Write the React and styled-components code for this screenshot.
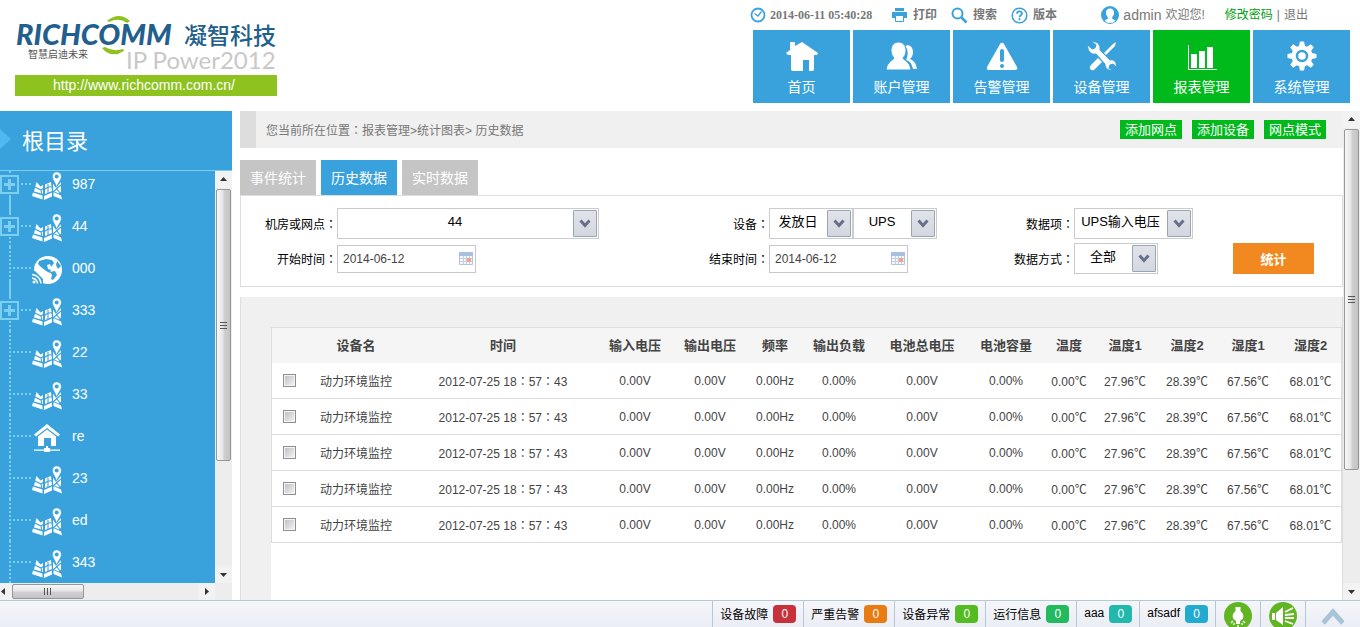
import React, { useState } from "react";
import styled, { createGlobalStyle, css } from "styled-components";

const blue = "#39a2dc";
const green = "#00ba1c";
const line = "#dddddd";

const GlobalStyle = createGlobalStyle`
  * {
    box-sizing: border-box;
  }
  body {
    margin: 0;
    background: #ffffff;
    font-family: "Liberation Sans", "Noto Sans CJK SC", sans-serif;
    font-size: 12px;
    color: #444444;
  }
  a {
    color: inherit;
    text-decoration: none;
  }
  button, input, select {
    font-family: inherit;
    margin: 0;
  }
`;

const Page = styled.div`
  display: flex;
  flex-direction: column;
  height: 100vh;
  overflow: hidden;
`;

/* ---------- header ---------- */
const Header = styled.header`
  display: flex;
  justify-content: space-between;
  flex: none;
  height: 111px;
  padding: 0 10px 0 15px;
`;
const Brand = styled.div`
  display: flex;
  flex-direction: column;
  width: 262px;
`;
const Site = styled.a`
  height: 21px;
  line-height: 20px;
  padding-right: 4px;
  background: #8dc21f;
  color: #ffffff;
  font-size: 14px;
  text-align: center;
`;
const HeaderRight = styled.div`
  display: flex;
  flex-direction: column;
  width: 600px;
`;
const Tools = styled.div`
  display: flex;
  align-items: center;
  height: 30px;
  line-height: 20px;
  color: #777777;
  white-space: nowrap;
`;
const Clock = styled.time`
  display: flex;
  align-items: center;
  gap: 4px;
  width: 141px;
  font-family: "Liberation Serif", serif;
  font-weight: bold;
`;
const Tool = styled.a`
  display: flex;
  align-items: center;
  gap: 5px;
  width: 60px;
  font-weight: bold;
`;
const User = styled.div`
  display: flex;
  align-items: center;
  gap: 4px;
  margin-left: auto;
  padding-right: 20px;
`;
const UserName = styled.span`
  font-size: 14px;
`;
const Account = styled.div`
  display: flex;
  gap: 4px;
  padding-right: 42px;
`;
const Password = styled.a`
  color: #00a010;
`;
const Nav = styled.nav`
  display: flex;
  gap: 3px;
  padding-left: 3px;
`;
const NavItem = styled.a`
  flex: 1;
  display: flex;
  flex-direction: column;
  align-items: center;
  gap: 4px;
  height: 73px;
  padding-top: 10px;
  background: ${(p) => (p.$active ? green : blue)};
  color: #ffffff;
  font-size: 14px;
  line-height: 20px;
`;

/* ---------- scroll bars ---------- */
const Track = styled.div`
  flex: none;
  display: flex;
  background: #ededed;
  ${(p) =>
    p.$horizontal
      ? css`
          height: 17px;
        `
      : css`
          flex-direction: column;
          width: 17px;
        `}
`;
const TrackEnd = styled.span`
  flex: none;
  display: flex;
  align-items: center;
  justify-content: center;
  width: 17px;
  height: 17px;
  background: #f2f2f2;
`;
const Thumb = styled.span`
  flex: ${(p) => p.$size} 1 0;
  display: flex;
  align-items: center;
  justify-content: center;
  margin: ${(p) => (p.$horizontal ? "1px 0" : "1px 1px 0")};
  border: 1px solid #979797;
  border-radius: 2px;
  background: linear-gradient(
    ${(p) => (p.$horizontal ? "180deg" : "90deg")},
    #f6f6f6 0%,
    #e6e6e8 45%,
    #cfcfd2 55%,
    #c2c3c7 100%
  );
`;
const Rest = styled.span`
  flex: ${(p) => p.$size} 1 0;
`;

function Arrow({ d }) {
  return (
    <svg width="9" height="9" viewBox="0 0 9 9">
      <path d={d} fill="#333" />
    </svg>
  );
}

function Scrollbar({ size, horizontal }) {
  return (
    <Track $horizontal={horizontal} aria-hidden="true">
      <TrackEnd>
        <Arrow d={horizontal ? "M6 1v7L2 4.500z" : "M1 6h7L4.500 2z"} />
      </TrackEnd>
      <Thumb $horizontal={horizontal} $size={size}>
        <svg width="9" height="9" viewBox="0 0 9 9" stroke="#555">
          {horizontal ? (
            <path d="M1.500 1v7M4.500 1v7M7.500 1v7" />
          ) : (
            <path d="M1 1.500h7M1 4.500h7M1 7.500h7" />
          )}
        </svg>
      </Thumb>
      <Rest $size={100 - size} />
      <TrackEnd>
        <Arrow d={horizontal ? "M3 1v7l4-3.500z" : "M1 3h7L4.500 7z"} />
      </TrackEnd>
    </Track>
  );
}

/* ---------- sidebar ---------- */
const Body = styled.div`
  flex: 1;
  display: flex;
  min-height: 0;
`;
const Sidebar = styled.aside`
  display: flex;
  flex-direction: column;
  flex: none;
  width: 232px;
  margin-right: 8px;
`;
const SideTitle = styled.h2`
  display: flex;
  align-items: center;
  gap: 11px;
  flex: none;
  height: 60px;
  margin: 0;
  padding-bottom: 4px;
  border-bottom: 1px solid #7bcdf2;
  background: ${blue};
  color: #ffffff;
  font-size: 22px;
  font-weight: normal;
`;
const SideBody = styled.div`
  flex: 1;
  display: flex;
  min-height: 0;
`;
const TreeBox = styled.div`
  flex: 1;
  overflow: hidden;
  background: ${blue};
`;
const Tree = styled.ul`
  margin: -8px 0 0;
  padding: 0;
  list-style: none;
`;
const Node = styled.li`
  display: flex;
  align-items: center;
  height: 42px;
  color: #ffffff;
  font-size: 14px;
  svg {
    margin: 4px 10px 0 0;
  }
`;
const dots = (dir) =>
  `repeating-linear-gradient(${dir}, #7bcff0 0 2px, transparent 2px 4px)`;
const solid = "linear-gradient(#7bcff0, #7bcff0)";
const Gutter = styled.span`
  display: flex;
  align-items: center;
  width: 32px;
  height: 42px;
  background:
    ${(p) => (p.$open ? solid : "none")} 9px 0 / 2px 9px no-repeat,
    ${(p) => (p.$nextOpen ? solid : "none")} 9px 100% / 2px 8px no-repeat,
    ${dots("180deg")} 9px 0 / 2px 100% no-repeat,
    ${dots("90deg")} 13px 20px / 18px 2px no-repeat;
`;
const Expand = styled.button`
  width: 19px;
  height: 19px;
  padding: 0;
  border: 2px solid #7bcff0;
  background:
    ${solid} center / 11px 3px no-repeat,
    ${solid} center / 3px 11px no-repeat,
    ${blue};
`;
const SideFoot = styled.div`
  height: 17px;
  overflow: hidden;
  background: #ededed;
  > div {
    width: 220px;
    margin-left: -5px;
  }
`;

/* ---------- content ---------- */
const Main = styled.main`
  flex: 1;
  display: flex;
  flex-direction: column;
  min-width: 0;
`;
const Crumbs = styled.div`
  display: flex;
  align-items: center;
  gap: 10px;
  flex: none;
  height: 37px;
  padding: 0 17px 0 10px;
  border-left: 16px solid ${line};
  background: #f0f0f0;
  color: #777777;
`;
const Path = styled.span`
  flex: 1;
`;
const AddButton = styled.button`
  height: 19px;
  padding: 0 5px;
  border: 0;
  background: ${green};
  color: #ffffff;
  font-size: 13px;
  line-height: 18px;
`;
const Tabs = styled.div`
  display: flex;
  gap: 5px;
  flex: none;
  padding-top: 12px;
`;
const Tab = styled.button`
  width: 76px;
  height: 35px;
  padding: 0 0 2px;
  border: 0;
  background: ${(p) => (p.$active ? blue : "#c5c5c5")};
  color: #ffffff;
  font-size: 14px;
`;
const Filters = styled.form`
  display: grid;
  grid-template-columns: 96px 336fr 96px 209fr 96px 159fr 109px;
  grid-auto-rows: 31px;
  row-gap: 4px;
  align-items: center;
  flex: none;
  padding: 12px 0;
  border: 1px solid ${line};
`;
const Label = styled.label`
  text-align: right;
  color: #000000;
`;
const Colon = styled.span`
  font-family: "Noto Sans CJK TC", sans-serif;
`;
const Selects = styled.div`
  display: flex;
`;
const SelectBox = styled.div`
  display: grid;
  width: ${(p) => p.$width}px;
  height: 31px;
  border: 1px solid #cccccc;
  > * {
    grid-area: 1 / 1;
  }
`;
const Select = styled.select`
  appearance: none;
  min-width: 0;
  height: 29px;
  padding: 0 26px 4px 0;
  border: 0;
  background: #ffffff;
  color: #000000;
  font-size: 13px;
  text-align: center;
  text-align-last: center;
`;
const SelectArrow = styled.span`
  display: flex;
  align-items: center;
  justify-content: center;
  justify-self: end;
  width: 24px;
  height: 27px;
  margin: 1px;
  border: 1px solid #9ba4b5;
  border-radius: 1px;
  background: linear-gradient(#e0e3e9, #d3d7df);
  pointer-events: none;
`;
const DateBox = styled.div`
  display: flex;
  align-items: center;
  width: 139px;
  height: 28px;
  padding: 0 2px 0 5px;
  border: 1px solid #c4c8cc;
`;
const DateInput = styled.input`
  flex: 1;
  min-width: 0;
  padding: 0;
  border: 0;
  outline: 0;
  color: #444444;
  font-size: 12px;
`;
const Submit = styled.button`
  width: 81px;
  height: 31px;
  grid-column: 7;
  border: 0;
  background: #f28820;
  color: #ffffff;
  font-size: 13px;
  font-weight: bold;
`;
const Results = styled.section`
  flex: 1;
  display: flex;
  min-height: 0;
  margin-top: 10px;
  padding: 30px 0 0 30px;
  border: 1px solid ${line};
  border-width: 0 1px;
  background: #f0f0f0;
`;
const Sheet = styled.div`
  flex: 1;
  background: #ffffff;
`;
const Table = styled.table`
  width: 100%;
  table-layout: fixed;
  border-collapse: separate;
  border-spacing: 0;
  border: 1px solid ${line};
  border-bottom: 0;
  white-space: nowrap;
  text-align: center;
  th {
    height: 35px;
    padding: 0 0 2px;
    background: #f5f5f5;
    font-size: 13px;
  }
  td {
    height: 36px;
    padding: 0;
    border-bottom: 1px solid ${line};
  }
`;
const Check = styled.input`
  appearance: none;
  display: block;
  width: 13px;
  height: 13px;
  margin: 0 auto;
  border: 1px solid #8e8f8f;
  background: linear-gradient(135deg, #b9bcc2, #f6f6f6);
  box-shadow: inset 0 0 0 1px #f4f4f4;
  &:checked {
    background: ${blue};
  }
`;

/* ---------- status bar ---------- */
const StatusBar = styled.footer`
  display: flex;
  justify-content: flex-end;
  flex: none;
  height: 27px;
  overflow: hidden;
  border-top: 1px solid #b4c9d8;
  background: linear-gradient(#f5f6fa, #ebedf5);
`;
const Status = styled.a`
  display: flex;
  align-items: center;
  gap: 5px;
  height: 26px;
  padding: 0 7px;
  border-left: 1px solid #b4c9d8;
  color: #000000;
`;
const StatusName = styled.span`
  padding-bottom: 2px;
`;
const Badge = styled.span`
  width: 23px;
  height: 18px;
  margin-bottom: 1px;
  border-radius: 4px;
  background: ${(p) => p.$color};
  color: #ffffff;
  line-height: 18px;
  text-align: center;
`;
const StatusButton = styled.button`
  display: flex;
  justify-content: center;
  width: ${(p) => (p.$wide ? 55 : 45)}px;
  padding: 1px 0 0;
  border: 0;
  border-left: 1px solid #b4c9d8;
  background: none;
`;

/* ---------- icons ---------- */
const Logo = () => (
  <svg width="262" height="75" viewBox="0 0 262 75">
    <g fill="#235f8c">
      <text x="1" y="45" fontFamily="Lato" fontSize="29" fontWeight="900" fontStyle="italic">
        RICHCOMM
      </text>
      <text x="169" y="44" fontFamily="Noto Sans CJK SC" fontSize="23" fontWeight="500">
        凝智科技
      </text>
    </g>
    <text x="13" y="58" fontFamily="Noto Sans CJK SC" fontSize="10" fill="#555">
      智慧启迪未来
    </text>
    <text x="111" y="69" fontFamily="Lato" fontSize="24" fill="#c8c8c8">
      IP Power2012
    </text>
    <path d="M92 21q12-10 23 0l-3 2q-8-6-18-1z" fill="#8dc21f" />
    <path d="M87 48q9 11 22 3l-1-2q-10 3-18-2z" fill="#8dc21f" />
  </svg>
);

const ClockIcon = () => (
  <svg width="16" height="16" viewBox="0 0 16 16" fill="none" stroke={blue}>
    <circle cx="8" cy="8" r="6.500" strokeWidth="1.800" />
    <path d="M4.500 6.500L8 9l3.500-4.500" strokeWidth="1.300" />
  </svg>
);
const PrintIcon = () => (
  <svg width="17" height="16" viewBox="0 0 17 16" fill={blue}>
    <path d="M4 1h9v3H4zM1 5h15v6h-2V8H3v3H1z" />
    <path d="M1 5h15v6H1z" />
    <path d="M4.500 8.500h8v6h-8z" fill="#fff" stroke={blue} />
  </svg>
);
const SearchIcon = () => (
  <svg width="17" height="17" viewBox="0 0 17 17" fill="none" stroke={blue}>
    <circle cx="6.500" cy="6.500" r="5" strokeWidth="2" />
    <path d="M10.500 10.500l5 5" strokeWidth="2.600" />
  </svg>
);
const HelpIcon = () => (
  <svg width="17" height="17" viewBox="0 0 17 17" fill="none" stroke={blue}>
    <circle cx="8.500" cy="8.500" r="7.300" strokeWidth="1.500" />
    <path d="M6 6.800c0-3.200 5-3.200 5-.3 0 1.700-2.500 1.800-2.500 3.700M8.500 11.200v2" strokeWidth="1.800" />
  </svg>
);
const UserIcon = () => (
  <svg width="18" height="18" viewBox="0 0 18 18">
    <circle cx="9" cy="9" r="9" fill={blue} />
    <path
      d="M9 2.500c-2.600 0-4 1.800-4 4.300 0 1.800.8 3.200 1.800 4.200v1.700L3.500 14.500 6 16.800h6l2.500-2.300-3.300-1.800V11c1-1 1.800-2.400 1.800-4.200 0-2.500-1.400-4.300-4-4.300z"
      fill="#fff"
    />
  </svg>
);

const NavSvg = ({ children }) => (
  <svg width="32" height="33" viewBox="0 0 32 33" fill="#fff">
    {children}
  </svg>
);
const HomeIcon = () => (
  <NavSvg>
    <path d="M16 2l16 11-1 2h-3v14q0 2-2 2h-3V20h-6v11H7q-2 0-2-2V15H2l-2-2 4-3V3q0-1 1-1h3q1 0 1 1v3z" />
  </NavSvg>
);
const UsersIcon = () => (
  <NavSvg>
    <path d="M19 6c4-2 8 1 8 6 0 3-1 5-3 7 4 2 6 4 7 10h-4c-1-5-3-8-7-9 2-3 3-10-1-14z" />
    <path
      d="M12.500 2c4.500 0 7.500 3.500 7.500 8.500 0 4-2 6.500-3 7.500 0 2 7 3 8 12H0c1-9 8-10 8-12-1-1-3-3.500-3-7.500C5 5.500 8 2 12.500 2z"
      stroke={blue}
      strokeWidth="1"
    />
  </NavSvg>
);
const AlarmIcon = () => (
  <NavSvg>
    <path d="M14 4q2-3 4 0l13 23q1 3-2 3H3q-3 0-2-3z" />
    <path d="M16 11v9" stroke={blue} strokeWidth="4" strokeLinecap="round" />
    <circle cx="16" cy="26" r="2" fill={blue} />
  </NavSvg>
);
const WrenchIcon = () => (
  <NavSvg>
    <path d="M27 4l3-2-1 4-9 9-2-2z" />
    <path d="M12 18l4 4-8 8q-2 1-4-1-1-2 1-4z" />
    <path
      d="M2 5l4 4 3-1 1-3-4-3c4-1 8 2 8 6v2l10 10c4-1 7 2 6 7l-3-3-3 1-1 3 3 2c-4 1-7-2-7-6l-9-10c-5 1-9-3-8-9z"
      stroke={blue}
      strokeWidth="1"
    />
  </NavSvg>
);
const ChartIcon = () => (
  <NavSvg>
    <path d="M2 5h1v24h28v1H2zM5 14h6v14H5zM13 11h6v17h-6zM21 7h6v21h-6z" />
  </NavSvg>
);
const GearIcon = () => (
  <NavSvg>
    {[0, 45, 90, 135, 180, 225, 270, 315].map((a) => (
      <path key={a} d="M14 1.500h4l1.500 7h-7z" transform={`rotate(${a} 16 16)`} />
    ))}
    <circle cx="16" cy="16" r="10.500" />
    <circle cx="16" cy="16" r="5" fill="none" stroke={blue} strokeWidth="2.500" />
  </NavSvg>
);

const MapIcon = () => (
  <svg width="30" height="28" viewBox="0 0 30 28" fill="#fff">
    <path d="M4.500 10l4 4.500 2.500-1.500v9l-9-2.500zM13 12.500l6-2.500 1 9-7 3zM20.500 11l3.500 5 5-6v9.500l-2 2-6-2.500z" />
    <path d="M1 20.500l9.500 3v4L0 24zM12 24l8-3.500v4l-8 3.500zM21.500 20l7.500 3.500 1 4-8.500-3.500z" />
    <path
      d="M3 15l6 3 3-2M9 18l1 5M12 18q4-4 8-3M16 12v9M20.500 10v11M21 20l8-7M24 16l5 6"
      fill="none"
      stroke={blue}
      strokeWidth="1.100"
    />
    <path
      d="M24.500 0c3 0 4.800 2 4.800 4.600 0 3-3 6-4.800 10.400-1-4.400-4-7.400-4-10.400C20.500 2 22 0 24.500 0z"
      stroke={blue}
      strokeWidth=".5"
    />
    <circle cx="24.700" cy="4.600" r="2" fill={blue} />
  </svg>
);
const GlobeIcon = () => (
  <svg width="30" height="29" viewBox="0 0 30 29">
    <circle cx="16" cy="14" r="14" fill="#fff" />
    <path
      d="M7 5l7-2 6 1 2 3-3 4-1-3-3 1 1 4 3 1-1 3-4-2-5-4-3-3zM18 16l5-1 2 4-4 5-2-1 1-4zM25 5l4 5-3 3-2-4z"
      fill={blue}
    />
    <path d="M0 15h3l8 8v6H0z" fill={blue} />
    <path d="M0 18.500q8 1 9 9M0 22q5 1 5.500 5.500" fill="none" stroke="#fff" strokeWidth="1.400" />
    <circle cx="2" cy="26" r="1.500" fill="#fff" />
  </svg>
);
const HouseIcon = () => (
  <svg width="30" height="28" viewBox="0 0 30 28" fill="#fff">
    <path d="M15 0l13 10.500-2 2L15 4 4 12.500l-2-2z" />
    <path d="M15 5.500l9 7V22h-5v-8h-7v8H6v-9.500z" />
    <path d="M2 25.500h10V24h2v-2h2v2h2v1.500h10v1.200H18V28h-6v-1.300H2z" />
  </svg>
);
const CalendarIcon = () => (
  <svg width="14" height="13" viewBox="0 0 14 13">
    <path d="M.5.500h13v12H.500z" fill="#f4f7fb" stroke="#b4c3da" />
    <path d="M0 0h14v4H0z" fill="#a9bfe0" />
    <path d="M1 6.500h12M1 9.500h12M4.500 4v8M7.500 4v8M10.500 4v8" stroke="#c3d0e4" />
    <path d="M8 6h4v4H8z" fill="#f0a58a" />
  </svg>
);
const LampIcon = () => (
  <svg width="28" height="28" viewBox="0 0 28 28">
    <circle cx="14" cy="14" r="14" fill="#62b522" />
    <path d="M11.500 5h5v4q4.500 4 2 8l-2.500 2h-4l-2.500-2q-2.500-4 2-8zM12 19h4v3h-4z" fill="#fff" />
    <path d="M9 19l-2 2M19 19l2 2M14 23v2M10.500 21l-1 2M17.500 21l1 2" stroke="#fff" strokeWidth="1.400" />
  </svg>
);
const SoundIcon = () => (
  <svg width="28" height="28" viewBox="0 0 28 28">
    <circle cx="14" cy="14" r="14" fill="#62b522" />
    <path d="M3 11h3v7H3zM7 11l7-6v18l-7-5z" fill="#fff" />
    <path d="M16 10l8-4M16 13l9-1M16 16h9M16 19l8 3" stroke="#fff" strokeWidth="1.800" />
  </svg>
);

/* ---------- data ---------- */
const nav = [
  ["首页", HomeIcon],
  ["账户管理", UsersIcon],
  ["告警管理", AlarmIcon],
  ["设备管理", WrenchIcon],
  ["报表管理", ChartIcon],
  ["系统管理", GearIcon],
];

const nodes = [
  { name: "987", icon: MapIcon, open: true },
  { name: "44", icon: MapIcon, open: true },
  { name: "000", icon: GlobeIcon },
  { name: "333", icon: MapIcon, open: true },
  { name: "22", icon: MapIcon },
  { name: "33", icon: MapIcon },
  { name: "re", icon: HouseIcon },
  { name: "23", icon: MapIcon },
  { name: "ed", icon: MapIcon },
  { name: "343", icon: MapIcon },
];

const columns = [
  ["设备名", 100],
  ["时间", 194],
  ["输入电压", 70, "0.00V"],
  ["输出电压", 80, "0.00V"],
  ["频率", 50, "0.00Hz"],
  ["输出负载", 78, "0.00%"],
  ["电池总电压", 88, "0.00V"],
  ["电池容量", 80, "0.00%"],
  ["温度", 46, "0.00℃"],
  ["温度1", 66, "27.96℃"],
  ["温度2", 58, "28.39℃"],
  ["湿度1", 64, "67.56℃"],
  ["湿度2", 61, "68.01℃"],
];

const statuses = [
  ["设备故障", "#c8303a"],
  ["严重告警", "#e87b12"],
  ["设备异常", "#55bb22"],
  ["运行信息", "#22b95f"],
  ["aaa", "#22b9ac"],
  ["afsadf", "#22aad0"],
];

function Dropdown({ id, label, width, value }) {
  return (
    <SelectBox $width={width}>
      <Select id={id} aria-label={label} defaultValue={value}>
        <option>{value}</option>
      </Select>
      <SelectArrow>
        <svg width="12" height="9" viewBox="0 0 12 9">
          <path d="M1.500 1.500L6 6.500l4.500-5" fill="none" stroke="#667088" strokeWidth="3" />
        </svg>
      </SelectArrow>
    </SelectBox>
  );
}

function DateField({ id }) {
  const [value, setValue] = useState("2014-06-12");
  return (
    <DateBox>
      <DateInput id={id} value={value} onChange={(e) => setValue(e.target.value)} />
      <CalendarIcon />
    </DateBox>
  );
}

function FieldLabel({ htmlFor, children }) {
  return (
    <Label htmlFor={htmlFor}>
      {children}
      <Colon>：</Colon>
    </Label>
  );
}

export default function App() {
  const [tab, setTab] = useState("历史数据");

  return (
    <Page>
      <GlobalStyle />
      <Header>
        <Brand>
          <Logo />
          <Site href="#">http://www.richcomm.com.cn/</Site>
        </Brand>
        <HeaderRight>
          <Tools>
            <Clock>
              <ClockIcon />
              2014-06-11 05:40:28
            </Clock>
            <Tool href="#">
              <PrintIcon />
              打印
            </Tool>
            <Tool href="#">
              <SearchIcon />
              搜索
            </Tool>
            <Tool href="#">
              <HelpIcon />
              版本
            </Tool>
            <User>
              <UserIcon />
              <UserName>admin</UserName>
              欢迎您!
            </User>
            <Account>
              <Password href="#">修改密码</Password>|<a href="#">退出</a>
            </Account>
          </Tools>
          <Nav>
            {nav.map(([name, Icon]) => (
              <NavItem key={name} href="#" $active={name === "报表管理"}>
                <Icon />
                {name}
              </NavItem>
            ))}
          </Nav>
        </HeaderRight>
      </Header>

      <Body>
        <Sidebar>
          <SideTitle>
            <svg width="11" height="20" viewBox="0 0 11 20">
              <path d="M0 0l11 10L0 20z" fill="#4fb8ee" />
            </svg>
            根目录
          </SideTitle>
          <SideBody>
            <TreeBox>
              <Tree>
                {nodes.map(({ name, icon: Icon, open }, i) => (
                  <Node key={name}>
                    <Gutter $open={open} $nextOpen={nodes[i + 1]?.open}>
                      {open && <Expand aria-label={name} />}
                    </Gutter>
                    <Icon />
                    <a href="#">{name}</a>
                  </Node>
                ))}
              </Tree>
            </TreeBox>
            <Scrollbar size={72} />
          </SideBody>
          <SideFoot>
            <Scrollbar horizontal size={38} />
          </SideFoot>
        </Sidebar>

        <Main>
          <Crumbs>
            <Path>
              您当前所在位置<Colon>：</Colon>报表管理&gt;统计图表&gt; 历史数据
            </Path>
            <AddButton>添加网点</AddButton>
            <AddButton>添加设备</AddButton>
            <AddButton>网点模式</AddButton>
          </Crumbs>
          <Tabs>
            {["事件统计", "历史数据", "实时数据"].map((name) => (
              <Tab key={name} $active={name === tab} onClick={() => setTab(name)}>
                {name}
              </Tab>
            ))}
          </Tabs>
          <Filters onSubmit={(e) => e.preventDefault()}>
            <FieldLabel htmlFor="room">机房或网点</FieldLabel>
            <Dropdown id="room" width={262} value="44" />
            <FieldLabel htmlFor="device">设备</FieldLabel>
            <Selects>
              <Dropdown id="device" width={84} value="发放日" />
              <Dropdown label="设备类型" width={84} value="UPS" />
            </Selects>
            <FieldLabel htmlFor="item">数据项</FieldLabel>
            <Dropdown id="item" width={119} value="UPS输入电压" />
            <span />
            <FieldLabel htmlFor="start">开始时间</FieldLabel>
            <DateField id="start" />
            <FieldLabel htmlFor="end">结束时间</FieldLabel>
            <DateField id="end" />
            <FieldLabel htmlFor="mode">数据方式</FieldLabel>
            <Dropdown id="mode" width={84} value="全部" />
            <Submit>统计</Submit>
          </Filters>
          <Results>
            <Sheet>
              <Table>
                <colgroup>
                  <col width="34" />
                  {columns.map(([name, width]) => (
                    <col key={name} width={width} />
                  ))}
                </colgroup>
                <thead>
                  <tr>
                    <th />
                    {columns.map(([name]) => (
                      <th key={name}>{name}</th>
                    ))}
                  </tr>
                </thead>
                <tbody>
                  {[1, 2, 3, 4, 5].map((n) => (
                    <tr key={n}>
                      <td>
                        <Check type="checkbox" aria-label={`动力环境监控 ${n}`} />
                      </td>
                      <td>动力环境监控</td>
                      <td>
                        2012-07-25 18<Colon>：</Colon>57<Colon>：</Colon>43
                      </td>
                      {columns.slice(2).map(([name, , value]) => (
                        <td key={name}>{value}</td>
                      ))}
                    </tr>
                  ))}
                </tbody>
              </Table>
            </Sheet>
          </Results>
        </Main>
        <Scrollbar size={75} />
      </Body>

      <StatusBar>
        {statuses.map(([name, color]) => (
          <Status key={name} href="#">
            <StatusName>{name}</StatusName>
            <Badge $color={color}>0</Badge>
          </Status>
        ))}
        <StatusButton aria-label="灯光">
          <LampIcon />
        </StatusButton>
        <StatusButton aria-label="声音">
          <SoundIcon />
        </StatusButton>
        <StatusButton aria-label="展开" $wide>
          <svg width="22" height="26" viewBox="0 0 22 26">
            <path d="M1 21L11 10l10 11" fill="none" stroke="#a9c4d6" strokeWidth="5" />
          </svg>
        </StatusButton>
      </StatusBar>
    </Page>
  );
}
